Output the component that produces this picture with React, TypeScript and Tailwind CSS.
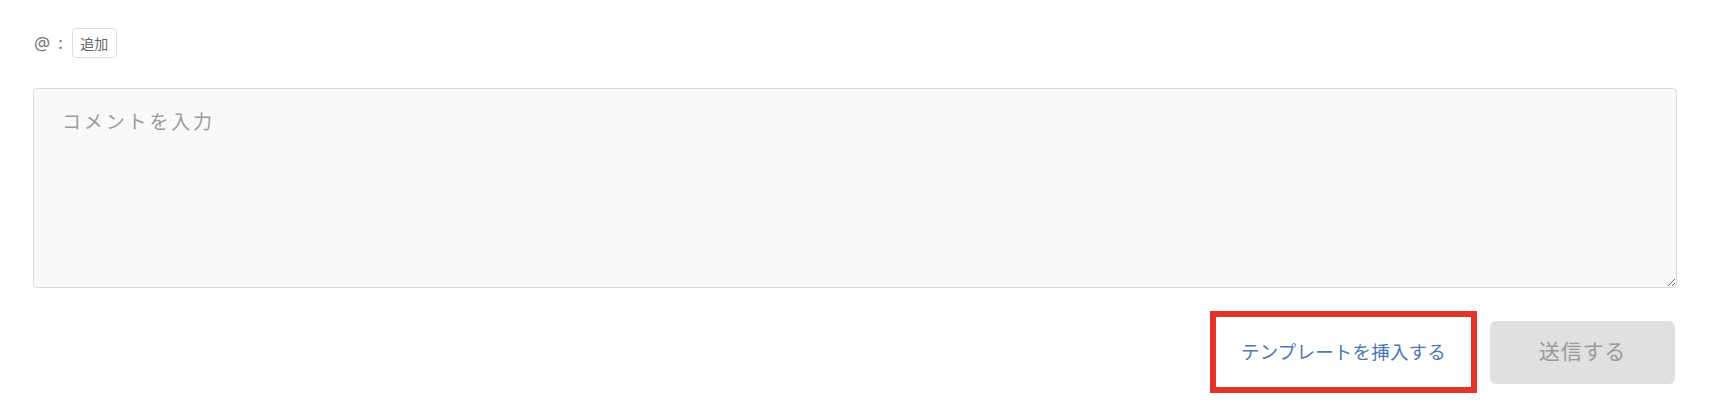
export default function App() {
  return (
    <main
      className="min-h-screen bg-white px-[33px] pt-[28px]"
      style={{ fontFamily: '"Noto Sans", "Noto Sans CJK JP", sans-serif' }}
    >
      {/* mention row */}
      <div className="flex h-[30px] items-center text-[#777]">
        <span className="ml-[1px] text-[18px]">@</span>
        <span className="ml-[8px] text-[17px]">:</span>
        <button className="ml-[9px] flex h-[30px] w-[45px] items-center justify-center rounded-[4px] border border-[#dedede] bg-white text-[14px] text-[#666]">
          追加
        </button>
      </div>

      {/* comment box */}
      <textarea
        placeholder="コメントを入力"
        className="mt-[30px] block h-[200px] w-full rounded-[4px] border border-[#d9d9d9] bg-[#f9f9f9] px-[28px] pt-[20px] text-[19px] leading-[26px] tracking-[0.15em] text-[#333] outline-none placeholder:text-[#9c9c9c]"
      />

      {/* actions */}
      <div className="mt-[23px] mr-[2px] flex items-center justify-end gap-[13px]">
        <div className="flex h-[82px] w-[267px] items-center justify-center border-[6px] border-[#e33527] bg-white">
          <button className="text-[18.5px] tracking-[0.01em] text-[#4b78b3]">
            テンプレートを挿入する
          </button>
        </div>
        <button className="flex h-[63px] w-[185px] items-center justify-center rounded-[6px] bg-[#e0e0e0] text-[21px] tracking-[0.04em] text-[#9a9a9a]">
          送信する
        </button>
      </div>
    </main>
  );
}
